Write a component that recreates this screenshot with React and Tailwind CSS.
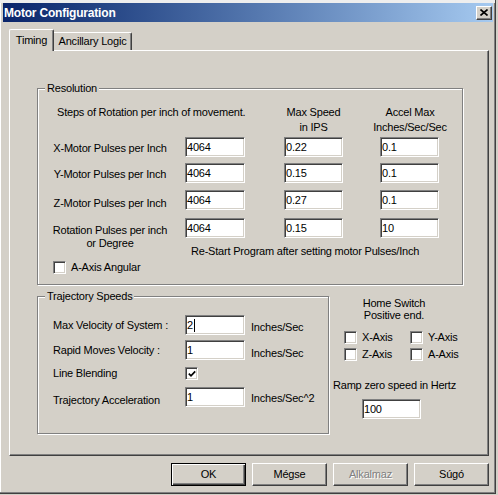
import React from "react";

const sunken =
  "border border-t-[#808080] border-l-[#808080] border-b-white border-r-white shadow-[inset_1px_1px_0_#404040,inset_-1px_-1px_0_#d4d0c8]";

function TextBox({ value, w = "w-[59px]", caret = false, className = "" }) {
  return (
    <div
      className={`${sunken} ${w} ${className} h-[20px] bg-white flex items-center pl-[1px] leading-none text-black shrink-0`}
    >
      <span>{value}</span>
      {caret && <span className="w-px h-[13px] bg-black ml-px" />}
    </div>
  );
}

function CheckBox({ checked = false }) {
  return (
    <div
      className={`${sunken} w-[13px] h-[13px] bg-white shrink-0 flex items-center justify-center`}
    >
      {checked && (
        <svg width="8" height="8" viewBox="0 0 8 8">
          <path d="M0.8 3.6 L3 5.8 L7.2 1.4" fill="none" stroke="black" strokeWidth="1.7" />
        </svg>
      )}
    </div>
  );
}

function GroupBox({ title, className = "", children }) {
  return (
    <div
      className={`relative border border-[#808080] shadow-[inset_1px_1px_0_#fff,1px_1px_0_#fff] shrink-0 ${className}`}
    >
      <span className="absolute -top-[7px] left-[7px] px-[2px] bg-[#d4d0c8] leading-[13px] whitespace-nowrap">
        {title}
      </span>
      {children}
    </div>
  );
}

function Button({ children, def = false, disabled = false }) {
  if (def) {
    return (
      <div className="w-[75px] h-[23px] flex items-center justify-center shrink-0 border border-black shadow-[inset_1px_1px_0_#fff,inset_-1px_-1px_0_#404040,inset_-2px_-2px_0_#808080]">
        {children}
      </div>
    );
  }
  return (
    <div
      className={`w-[75px] h-[23px] flex items-center justify-center shrink-0 border border-t-white border-l-white border-r-[#404040] border-b-[#404040] shadow-[inset_-1px_-1px_0_#808080] ${
        disabled ? "text-[#808080] [text-shadow:1px_1px_0_#fff]" : ""
      }`}
    >
      {children}
    </div>
  );
}

export default function App() {
  return (
    <div className="w-[498px] h-[495px] bg-[#d4d0c8] overflow-hidden font-['Liberation_Sans',Arial,sans-serif] text-[11px] tracking-[-0.2px] text-black">
      <div className="w-[496px] h-[494px] flex flex-col border-r border-b border-[#404040] shadow-[inset_-1px_-1px_0_#808080,inset_1px_0_0_#fff]">
        {/* strip of window behind */}
        <div className="h-[3px] bg-[#eeeeee] shrink-0" />
        {/* title bar */}
        <div className="ml-[3px] w-[490px] h-[19px] shrink-0 flex items-center bg-gradient-to-r from-[#0a246a] to-[#a6caf0]">
          <span className="pl-px text-white font-bold text-[12px] leading-none">Motor Configuration</span>
          <div className="ml-auto mr-px w-[16px] h-[14px] bg-[#d4d0c8] flex items-center justify-center border border-t-white border-l-white border-r-[#404040] border-b-[#404040] shadow-[inset_-1px_-1px_0_#808080]">
            <svg width="8" height="7" viewBox="0 0 8 7">
              <path d="M0.5 0.5 L7.5 6.5 M7.5 0.5 L0.5 6.5" stroke="black" strokeWidth="1.6" />
            </svg>
          </div>
        </div>

        {/* body */}
        <div className="pt-[7px] flex flex-col">
          {/* tabs */}
          <div className="ml-[9px] h-[21px] flex items-end">
            <div className="relative z-10 -mb-px w-[45px] h-[22px] bg-[#d4d0c8] flex items-center justify-center border-t border-l border-r border-t-white border-l-white border-r-[#404040] shadow-[inset_-1px_0_0_#808080] rounded-t-[2px]">
              Timing
            </div>
            <div className="w-[78px] h-[18px] flex items-center justify-center border-t border-r border-t-white border-r-[#404040] shadow-[inset_-1px_0_0_#808080] rounded-tr-[2px]">
              Ancillary Logic
            </div>
          </div>

          {/* tab panel */}
          <div className="ml-[9px] w-[480px] h-[406px] border border-t-white border-l-white border-r-[#404040] border-b-[#404040] shadow-[inset_-1px_-1px_0_#808080] pl-[27px] pt-[37px]">
            <GroupBox title="Resolution" className="w-[426px] h-[197px]">
              <div className="pl-[12px] pt-[16px]">
                <div className="flex leading-[15px]">
                  <div className="w-[214px] pl-[7px] whitespace-nowrap">
                    Steps of Rotation per inch of movement.
                  </div>
                  <div className="w-[99px] text-center">
                    Max Speed
                    <br />
                    in IPS
                  </div>
                  <div className="w-[94px] text-center">
                    Accel Max
                    <br />
                    Inches/Sec/Sec
                  </div>
                </div>

                <div className="flex h-[20px] mt-[2px]">
                  <div className="w-[120px] text-center leading-[20px] pt-px whitespace-nowrap">
                    X-Motor Pulses per Inch
                  </div>
                  <TextBox value="4064" w="w-[60px]" className="ml-[15px]" />
                  <TextBox value="0.22" className="ml-[39px]" />
                  <TextBox value="0.1" className="ml-[37px]" />
                </div>

                <div className="flex h-[20px] mt-[6px]">
                  <div className="w-[120px] text-center leading-[20px] pt-px whitespace-nowrap">
                    Y-Motor Pulses per Inch
                  </div>
                  <TextBox value="4064" w="w-[60px]" className="ml-[15px]" />
                  <TextBox value="0.15" className="ml-[39px]" />
                  <TextBox value="0.1" className="ml-[37px]" />
                </div>

                <div className="flex h-[20px] mt-[7px]">
                  <div className="w-[120px] text-center leading-[20px] pt-[3px] whitespace-nowrap">
                    Z-Motor Pulses per Inch
                  </div>
                  <TextBox value="4064" w="w-[60px]" className="ml-[15px]" />
                  <TextBox value="0.27" className="ml-[39px]" />
                  <TextBox value="0.1" className="ml-[37px]" />
                </div>

                <div className="flex mt-[8px]">
                  <div className="w-[120px] text-center leading-[13px] pt-[6px] whitespace-nowrap">
                    Rotation Pulses per inch
                    <br />
                    or Degree
                  </div>
                  <div className="ml-[15px] flex flex-col">
                    <div className="flex h-[20px]">
                      <TextBox value="4064" w="w-[60px]" />
                      <TextBox value="0.15" className="ml-[39px]" />
                      <TextBox value="10" className="ml-[37px]" />
                    </div>
                    <div className="ml-[6px] mt-[7px] leading-[13px] whitespace-nowrap">
                      Re-Start Program after setting motor Pulses/Inch
                    </div>
                  </div>
                </div>

                <div className="flex items-center mt-[3px] ml-[3px]">
                  <CheckBox />
                  <span className="ml-[5px] leading-[13px]">A-Axis Angular</span>
                </div>
              </div>
            </GroupBox>

            <div className="flex mt-[11px]">
              <GroupBox title="Trajectory Speeds" className="w-[292px] h-[138px]">
                <div className="pl-[15px] pt-[18px]">
                  <div className="flex h-[20px]">
                    <div className="w-[132px] leading-[20px]">Max Velocity of System :</div>
                    <TextBox value="2" caret w="w-[60px]" />
                    <div className="ml-[6px] leading-[20px] pt-[2px]">Inches/Sec</div>
                  </div>
                  <div className="flex h-[20px] mt-[5px]">
                    <div className="w-[132px] leading-[20px]">Rapid Moves Velocity :</div>
                    <TextBox value="1" w="w-[60px]" />
                    <div className="ml-[6px] leading-[20px] pt-[3px]">Inches/Sec</div>
                  </div>
                  <div className="flex h-[13px] mt-[7px]">
                    <div className="w-[132px] leading-[13px]">Line Blending</div>
                    <CheckBox checked />
                  </div>
                  <div className="flex h-[20px] mt-[7px]">
                    <div className="w-[132px] leading-[20px] pt-[3px]">Trajectory Acceleration</div>
                    <TextBox value="1" w="w-[60px]" />
                    <div className="ml-[6px] leading-[20px] pt-px">Inches/Sec^2</div>
                  </div>
                </div>
              </GroupBox>

              <div className="ml-[4px] w-[122px] flex flex-col">
                <div className="text-center leading-[12px] mt-px">
                  Home Switch
                  <br />
                  Positive end.
                </div>
                <div className="mt-[10px] ml-[11px] w-[130px] grid grid-cols-[66px_64px] gap-y-[4px]">
                  {["X-Axis", "Y-Axis", "Z-Axis", "A-Axis"].map((t) => (
                    <div key={t} className="flex items-center">
                      <CheckBox />
                      <span className="ml-[5px] leading-[13px] whitespace-nowrap">{t}</span>
                    </div>
                  ))}
                </div>
                <div className="mt-[18px] text-center leading-[13px] whitespace-nowrap">
                  Ramp zero speed in Hertz
                </div>
                <div className="mt-[7px] ml-[29px]">
                  <TextBox value="100" />
                </div>
              </div>
            </div>
          </div>

          {/* buttons */}
          <div className="mt-[7px] ml-[171px] flex gap-[6px]">
            <Button def>OK</Button>
            <Button>Mégse</Button>
            <Button disabled>Alkalmaz</Button>
            <Button>Súgó</Button>
          </div>
        </div>
      </div>
    </div>
  );
}
